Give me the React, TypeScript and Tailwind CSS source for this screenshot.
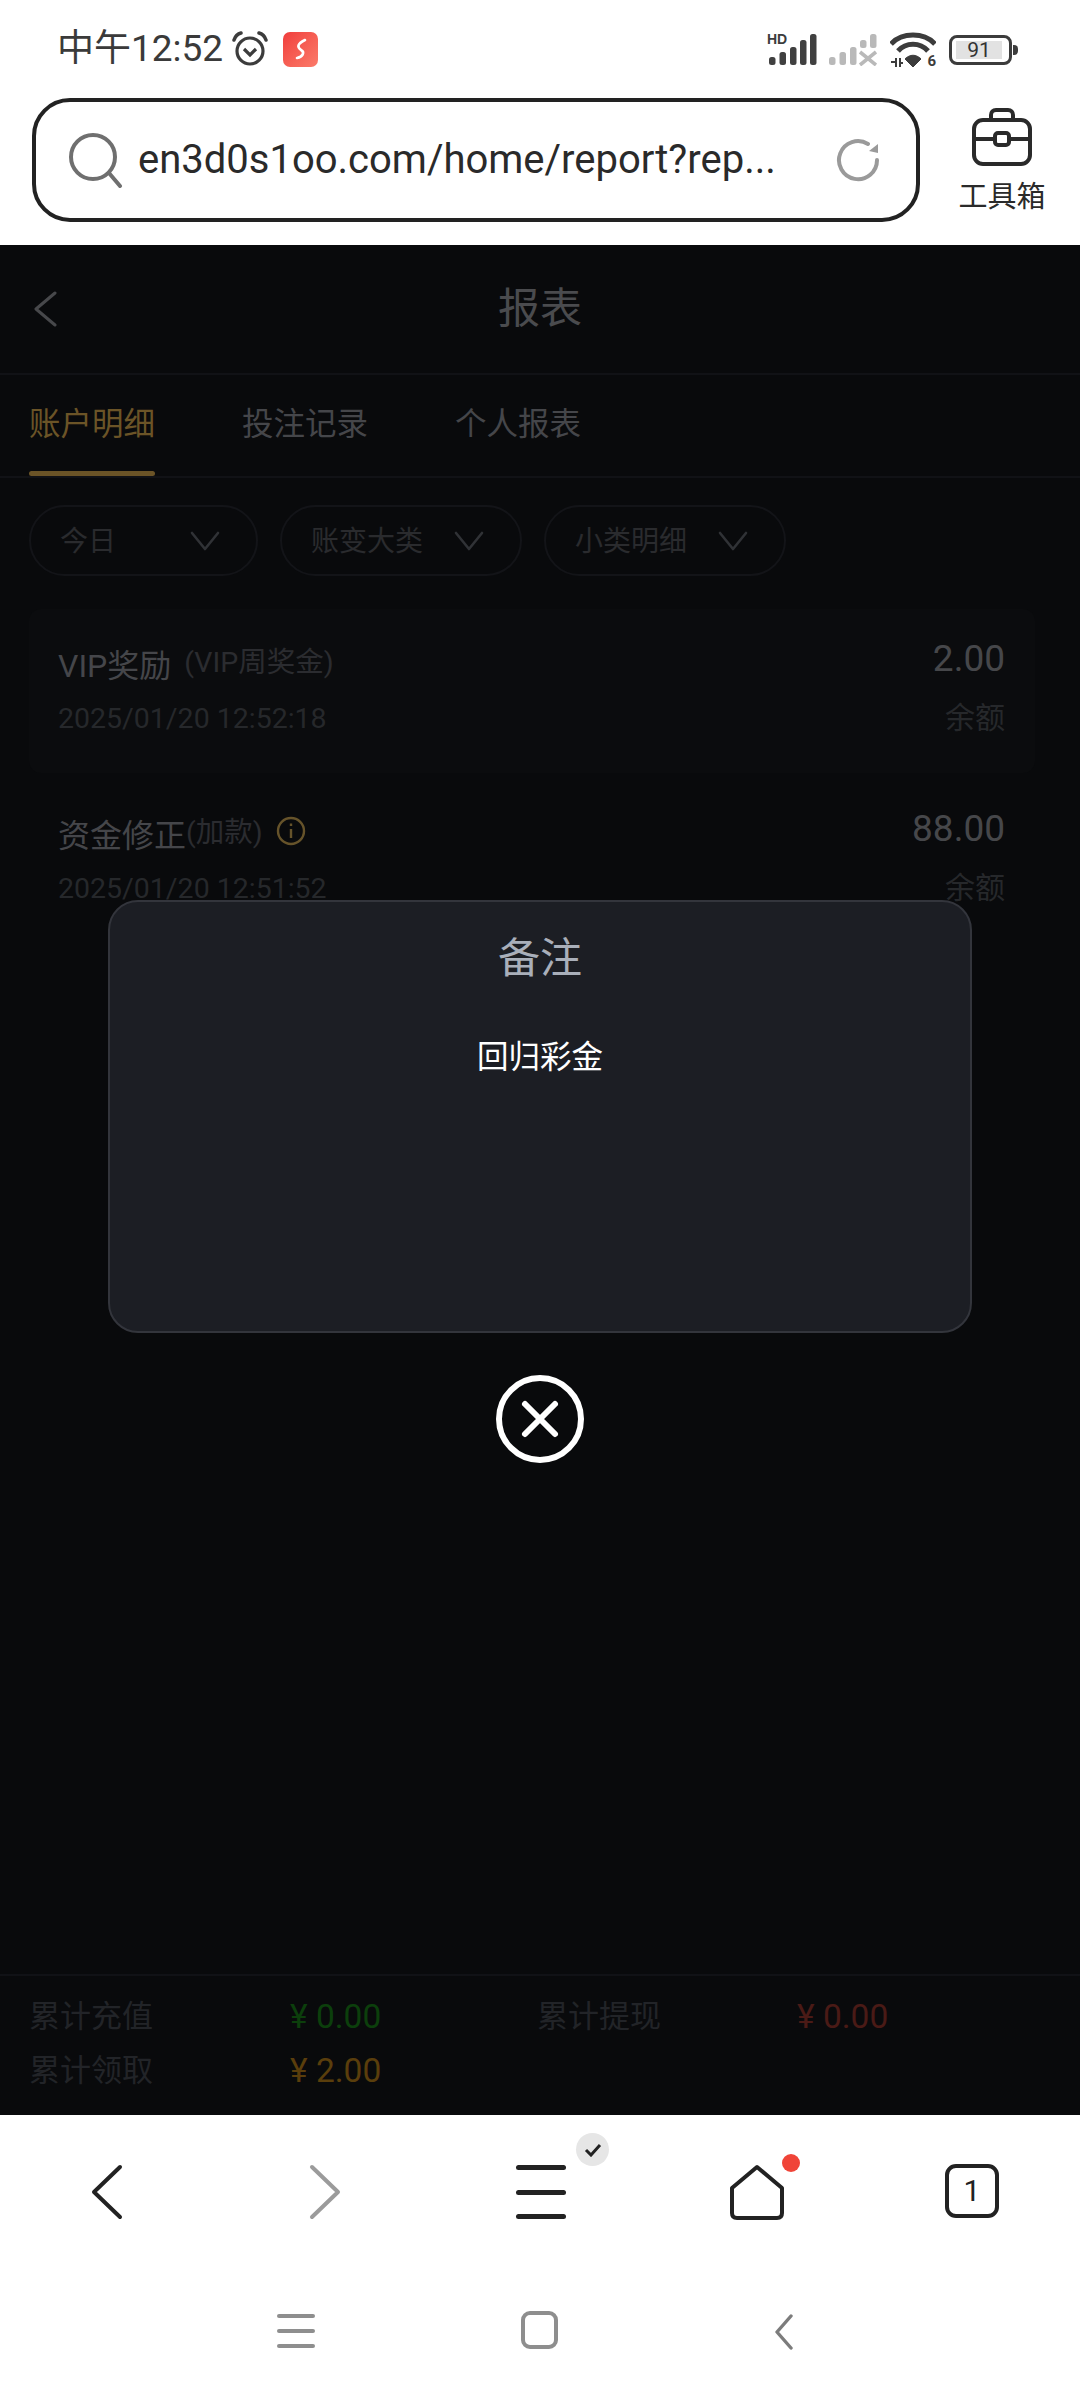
import { ReactNode } from 'react';

const FONT = "font-['Roboto','Noto_Sans_CJK_SC',sans-serif]";

function SignalBars({ color, crossed }: { color: string; crossed?: boolean }) {
  const bars = [
    { x: 0, h: 8 },
    { x: 10.5, h: 13 },
    { x: 21, h: 18 },
    { x: 31, h: 25 },
    { x: 41, h: 31 },
  ];
  return (
    <svg width="48" height="32" viewBox="0 0 48 32">
      {bars.map((b, i) => {
        const cut = crossed && i >= 3;
        return <rect key={b.x} x={b.x} y={31 - b.h} width="6.5" height={cut ? b.h - 17 : b.h} rx="2.5" fill={color} />;
      })}
      {crossed && <path d="M31 18 L47 31 M47 18 L31 31" stroke={color} strokeWidth="3.6" />}
    </svg>
  );
}

function StatusBar() {
  return (
    <div className="flex h-[98px] items-start justify-between pl-[57px] pr-[62px] pt-[28px]">
      <div className="flex items-center">
        <span className="w-[168px] text-[37px] leading-[42px] text-[#3a3a3a]">中午12:52</span>
        <svg className="ml-[7px]" width="36" height="36" viewBox="0 0 36 36" fill="none" stroke="#3c3c3c">
          <circle cx="18" cy="20" r="13" strokeWidth="3.2" />
          <path d="M12 18 L18 24 L24 18" strokeWidth="3.2" />
          <path d="M2 9 C3 6 5 3 9 2 M34 9 C33 6 31 3 27 2" strokeWidth="3.5" strokeLinecap="round" />
        </svg>
        <div className="ml-[15px] flex h-[35px] w-[35px] items-center justify-center rounded-[7px] bg-gradient-to-br from-[#f03c3c] to-[#fb7a6a]">
          <svg width="18" height="24" viewBox="0 0 18 24" fill="none" stroke="white" strokeWidth="2.6">
            <path d="M13 3 C5 7 5 10 9 13 C13 15 11 20 5 21" strokeLinecap="round" />
          </svg>
        </div>
      </div>
      <div className="mt-[4px] flex items-center">
        <div className="relative h-[32px] w-[48px]">
          <span className="absolute -left-[2px] -top-[1px] font-['Liberation_Sans',sans-serif] text-[14px] leading-[13px] font-bold text-[#3c3c3c]">HD</span>
          <SignalBars color="#404040" />
        </div>
        <div className="ml-[12px]">
          <SignalBars color="#b9b9b9" crossed />
        </div>
        <div className="relative ml-[13px] h-[36px] w-[46px]">
          <svg width="46" height="36" viewBox="0 0 46 36" fill="none" stroke="#3c3c3c">
            <path d="M1 12 C12 0 34 0 45 12" strokeWidth="5" />
            <path d="M8 19 C16 10 30 10 38 19" strokeWidth="5" />
            <path d="M23 35 L15 27 C20 22 26 22 31 27 Z" fill="#3c3c3c" strokeWidth="1" />
            <path d="M1 30 L5 30 M6 26 L6 35 M10 31 L13 31 M10 26 L10 35" strokeWidth="2" />
          </svg>
          <span className="absolute -bottom-[1px] right-0 text-[15px] leading-[15px] font-bold text-[#3c3c3c]">6</span>
        </div>
        <div className="ml-[13px] flex h-[30px] w-[63px] items-center rounded-[8px] border-[3px] border-[#3c3c3c] px-[4px] py-[3px]">
          <div className="flex h-full w-[46px] items-center justify-center bg-[#e2e2e2] text-[21px] leading-none text-[#333]">91</div>
        </div>
        <div className="ml-[1px] h-[10px] w-[5px] rounded-r bg-[#3c3c3c]" />
      </div>
    </div>
  );
}

function AddressBar() {
  return (
    <div className="flex h-[147px] items-start bg-white pl-[32px]">
      <div className="flex h-[124px] w-[888px] items-center rounded-[38px] border-[4px] border-[#222]">
        <svg className="ml-[32px]" width="56" height="56" viewBox="0 0 56 56" fill="none" stroke="#6f6f6f" strokeWidth="4">
          <circle cx="25" cy="25" r="22" />
          <path d="M41 41 L52 54" strokeLinecap="round" />
        </svg>
        <span className="ml-[14px] w-[644px] whitespace-nowrap text-[40px] leading-[48px] text-[#2a2a2a]">en3d0s1oo.com/home/report?rep...</span>
        <svg className="ml-[53px]" width="46" height="46" viewBox="0 0 46 46" fill="none" stroke="#9a9a9a" strokeWidth="4">
          <path d="M42 23 A19 19 0 1 1 33 7" strokeLinecap="round" />
          <path d="M34 14 L43 16 L43 7 Z" fill="#9a9a9a" stroke="none" />
        </svg>
      </div>
      <div className="ml-[32px] flex w-[100px] flex-col items-center pt-[10px]">
        <svg width="60" height="58" viewBox="0 0 60 58" fill="none" stroke="#2a2a2a" strokeWidth="4">
          <rect x="2" y="12" width="56" height="44" rx="9" />
          <path d="M19 12 V7 C19 4 21 2 24 2 H36 C39 2 41 4 41 7 V12" />
          <path d="M2 31 H23 M37 31 H58" />
          <rect x="23" y="25" width="14" height="12" rx="3" />
        </svg>
        <span className="mt-[13px] text-[29px] leading-[36px] text-[#2a2a2a]">工具箱</span>
      </div>
    </div>
  );
}

function FilterPill({ children, width }: { children: ReactNode; width: string }) {
  return (
    <div className={`flex h-[71px] items-center justify-between rounded-full border-2 border-[#131418] pl-[29px] pr-[36px] ${width}`}>
      <span className="mt-[2px] text-[28px] leading-[34px] text-[#2a2b2e]">{children}</span>
      <svg width="30" height="22" viewBox="0 0 30 22" fill="none" stroke="#303236" strokeWidth="2.6" strokeLinecap="round" strokeLinejoin="round">
        <path d="M2 3 L15 19 L28 3" />
      </svg>
    </div>
  );
}

function RecordRow({
  title,
  sub,
  time,
  amount,
  info,
  highlighted,
}: {
  title: string;
  sub: string;
  time: string;
  amount: string;
  info?: boolean;
  highlighted?: boolean;
}) {
  return (
    <div className={`flex h-[164px] justify-between rounded-[12px] pl-[29px] pr-[30px] pt-[35px] ${highlighted ? 'bg-[#0b0c0e]' : ''}`}>
      <div>
        <div className="flex h-[44px] items-center">
          <span className="text-[32px] leading-[40px] text-[#45464a]">{title}</span>
          <span className={`-mt-[6px] text-[28.5px] leading-[36px] text-[#2b2c30] ${highlighted ? 'ml-[13px]' : ''}`}>{sub}</span>
          {info && (
            <svg className="-mt-[11px] ml-[13px]" width="30" height="30" viewBox="0 0 30 30" fill="none" stroke="#66532a" strokeWidth="2.4">
              <circle cx="15" cy="15" r="13" />
              <path d="M15 13 V22 M15 7.5 V10" />
            </svg>
          )}
        </div>
        <div className="mt-[14px] text-[28.5px] leading-[34px] text-[#26282b]">{time}</div>
      </div>
      <div className="flex flex-col items-end">
        <span className="-mt-[7px] text-[37px] leading-[44px] text-[#46474a]">{amount}</span>
        <span className="mt-[19px] text-[30px] leading-[36px] text-[#26282b]">余额</span>
      </div>
    </div>
  );
}

function ReportPage() {
  return (
    <div className="flex h-full flex-col">
      <div className="relative flex h-[130px] items-center justify-center border-b-2 border-[#111216]">
        <svg className="absolute left-[33px] top-[46px]" width="24" height="36" viewBox="0 0 24 36" fill="none" stroke="#47484b" strokeWidth="3" strokeLinecap="round" strokeLinejoin="round">
          <path d="M22 2 L3 18 L22 34" />
        </svg>
        <span className="text-[42px] leading-[52px] text-[#4a4b4e]">报表</span>
      </div>
      <div className="flex h-[103px] gap-[87px] border-b-2 border-[#111216] pl-[29px] text-[31.5px] leading-[40px]">
        <div className="flex h-full flex-col items-center justify-between pt-[30px]">
          <span className="text-[#6b5427]">账户明细</span>
          <div className="h-[5px] w-[126px] rounded-full bg-[#6b5427]" />
        </div>
        <span className="pt-[30px] text-[#45464a]">投注记录</span>
        <span className="pt-[30px] text-[#45464a]">个人报表</span>
      </div>
      <div className="flex gap-[22px] pl-[29px] pt-[27px]">
        <FilterPill width="w-[229px]">今日</FilterPill>
        <FilterPill width="w-[242px]">账变大类</FilterPill>
        <FilterPill width="w-[242px]">小类明细</FilterPill>
      </div>
      <div className="mt-[33px] flex flex-col gap-[6px] pl-[29px] pr-[45px]">
        <RecordRow title="VIP奖励" sub="(VIP周奖金)" time="2025/01/20 12:52:18" amount="2.00" highlighted />
        <RecordRow title="资金修正" sub="(加款)" time="2025/01/20 12:51:52" amount="88.00" info />
      </div>
      <div className="mt-auto grid h-[141px] grid-cols-[261px_247px_260px_1fr] content-start gap-y-[14px] border-t-2 border-[#111216] pl-[29px] pt-[21px] text-[31px] leading-[40px]">
        <span className="text-[#222428]">累计充值</span>
        <span className="text-[33.5px] text-[#0c3f0c]">¥ 0.00</span>
        <span className="text-[#222428]">累计提现</span>
        <span className="text-[33.5px] text-[#4a1a16]">¥ 0.00</span>
        <span className="text-[#222428]">累计领取</span>
        <span className="text-[33.5px] text-[#5a3e0c]">¥ 2.00</span>
      </div>
    </div>
  );
}

function RemarkModal() {
  return (
    <div className="absolute inset-0 flex flex-col items-center pt-[655px]">
      <div className="flex h-[433px] w-[864px] flex-col items-center rounded-[30px] border-2 border-[#33353c] bg-[#1c1e24] pt-[30px]">
        <span className="text-[42px] leading-[54px] text-[#a9afba]">备注</span>
        <span className="mt-[52px] text-[31.5px] leading-[40px] text-white">回归彩金</span>
      </div>
      <svg className="mt-[42px]" width="88" height="88" viewBox="0 0 88 88" fill="none" stroke="white">
        <circle cx="44" cy="44" r="41" strokeWidth="6" />
        <path d="M29 29 L59 59 M59 29 L29 59" strokeWidth="6" strokeLinecap="round" />
      </svg>
    </div>
  );
}

function BrowserNav() {
  return (
    <div className="flex h-[133px] items-start bg-white pl-[90px] pt-[49px]">
      <svg width="34" height="56" viewBox="0 0 34 56" fill="none" stroke="#222" strokeWidth="4" strokeLinecap="round" strokeLinejoin="round">
        <path d="M30 3 L4 28 L30 53" />
      </svg>
      <svg className="ml-[184px]" width="34" height="56" viewBox="0 0 34 56" fill="none" stroke="#9b9b9b" strokeWidth="4" strokeLinecap="round" strokeLinejoin="round">
        <path d="M4 3 L30 28 L4 53" />
      </svg>
      <div className="relative ml-[174px] flex h-[56px] w-[50px] flex-col justify-between py-[1px]">
        <div className="h-[5px] rounded-full bg-[#222]" />
        <div className="h-[5px] rounded-full bg-[#222]" />
        <div className="h-[5px] rounded-full bg-[#222]" />
        <div className="absolute -right-[43px] -top-[31px] flex h-[33px] w-[33px] items-center justify-center rounded-full bg-[#e6e6e6]">
          <svg width="18" height="14" viewBox="0 0 18 14" fill="none" stroke="#222" strokeWidth="3">
            <path d="M2 7 L7 12 L16 2" />
          </svg>
        </div>
      </div>
      <div className="relative ml-[163px]">
        <svg width="56" height="56" viewBox="0 0 56 56" fill="none" stroke="#222" strokeWidth="4" strokeLinejoin="round">
          <path d="M28 3 L53 24 V49 Q53 54 48 54 H8 Q3 54 3 49 V24 Z" />
        </svg>
        <div className="absolute -right-[15px] -top-[10px] h-[18px] w-[18px] rounded-full bg-[#f04438]" />
      </div>
      <div className="ml-[160px] flex h-[54px] w-[54px] items-center justify-center rounded-[11px] border-4 border-[#222] text-[30px] leading-none text-[#222]">1</div>
    </div>
  );
}

function SystemNav() {
  return (
    <div className="flex h-[152px] items-start justify-center pr-[10px] pt-[66px]">
      <div className="flex h-[34px] w-[38px] flex-col justify-between">
        <div className="h-[4px] rounded-full bg-[#8e8e8e]" />
        <div className="h-[4px] rounded-full bg-[#8e8e8e]" />
        <div className="h-[4px] rounded-full bg-[#8e8e8e]" />
      </div>
      <div className="-mt-[3px] ml-[206px] h-[38px] w-[37px] rounded-[9px] border-[4px] border-[#8e8e8e]" />
      <svg className="ml-[216px]" width="20" height="36" viewBox="0 0 20 36" fill="none" stroke="#7c7c7c" strokeWidth="3.4" strokeLinecap="round" strokeLinejoin="round">
        <path d="M17 2 L3 18 L17 34" />
      </svg>
    </div>
  );
}

export default function App() {
  return (
    <div className={`flex h-[2400px] w-[1080px] flex-col overflow-hidden bg-white ${FONT}`}>
      <StatusBar />
      <AddressBar />
      <div className="relative flex-1 overflow-hidden bg-[#090a0c]">
        <ReportPage />
        <RemarkModal />
      </div>
      <BrowserNav />
      <SystemNav />
    </div>
  );
}
